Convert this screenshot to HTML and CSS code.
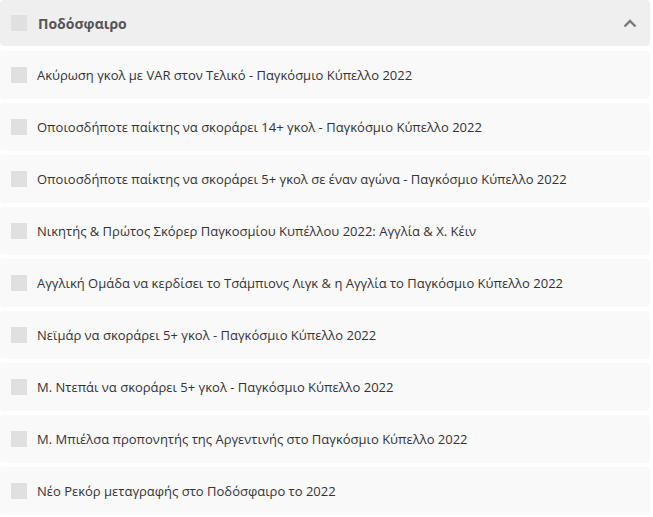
FILE: index.html
```html
<!DOCTYPE html>
<html lang="el">
<head>
<meta charset="utf-8">
<link rel="stylesheet" href="styles.css">
</head>
<body>
<div class="panel">
  <div class="header">
    <span class="box"></span>
    <span class="title">Ποδόσφαιρο</span>
    <svg class="chev" width="14" height="9" viewBox="0 0 14 9"><path d="M1.5 7.5 L7 2 L12.5 7.5" fill="none" stroke="#787878" stroke-width="2.4"/></svg>
  </div>
  <ul class="list">
    <li class="row"><span class="box"></span><span class="label">Ακύρωση γκολ με VAR στον Τελικό - Παγκόσμιο Κύπελλο 2022</span></li>
    <li class="row"><span class="box"></span><span class="label">Οποιοσδήποτε παίκτης να σκοράρει 14+ γκολ - Παγκόσμιο Κύπελλο 2022</span></li>
    <li class="row"><span class="box"></span><span class="label">Οποιοσδήποτε παίκτης να σκοράρει 5+ γκολ σε έναν αγώνα - Παγκόσμιο Κύπελλο 2022</span></li>
    <li class="row"><span class="box"></span><span class="label">Νικητής &amp; Πρώτος Σκόρερ Παγκοσμίου Κυπέλλου 2022: Αγγλία &amp; Χ. Κέιν</span></li>
    <li class="row"><span class="box"></span><span class="label">Αγγλική Ομάδα να κερδίσει το Τσάμπιονς Λιγκ &amp; η Αγγλία το Παγκόσμιο Κύπελλο 2022</span></li>
    <li class="row"><span class="box"></span><span class="label">Νεϊμάρ να σκοράρει 5+ γκολ - Παγκόσμιο Κύπελλο 2022</span></li>
    <li class="row"><span class="box"></span><span class="label">Μ. Ντεπάι να σκοράρει 5+ γκολ - Παγκόσμιο Κύπελλο 2022</span></li>
    <li class="row"><span class="box"></span><span class="label">Μ. Μπιέλσα προπονητής της Αργεντινής στο Παγκόσμιο Κύπελλο 2022</span></li>
    <li class="row"><span class="box"></span><span class="label">Νέο Ρεκόρ μεταγραφής στο Ποδόσφαιρο το 2022</span></li>
  </ul>
</div>
</body>
</html>
```

FILE: styles.css
```css
html, body {
  margin: 0;
  padding: 0;
  background: #ffffff;
}
body {
  font-family: "Open Sans", "Noto Sans", sans-serif;
  color: #333333;
}
.panel {
  width: 650px;
  display: flex;
  flex-direction: column;
  gap: 5px;
}
.header {
  height: 46px;
  background: #efefef;
  border-radius: 4px;
  display: flex;
  align-items: center;
  padding: 0 13px 0 11px;
  box-sizing: border-box;
}
.box {
  width: 16px;
  height: 16px;
  background: #e0e0e0;
  flex: none;
}
.title {
  margin-left: 11px;
  font-size: 14px;
  font-weight: 700;
  color: #555555;
  flex: 1;
}
.chev {
  display: block;
}
.list {
  list-style: none;
  margin: 0;
  padding: 0;
  display: flex;
  flex-direction: column;
  gap: 4px;
}
.row {
  height: 48px;
  background: #f9f9f9;
  border-radius: 4px;
  display: flex;
  align-items: center;
  padding-left: 11px;
  box-sizing: border-box;
}
.label {
  margin-left: 10px;
  font-size: 13px;
  color: #333333;
}
```
